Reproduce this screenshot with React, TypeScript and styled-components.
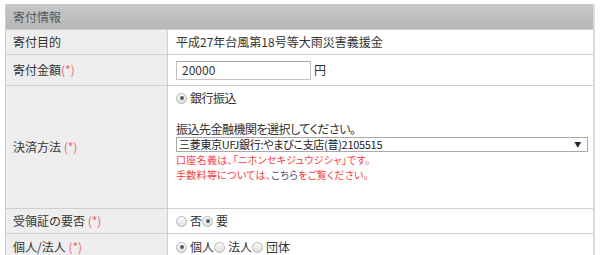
import React, { FunctionComponent } from 'react';
import styled, { createGlobalStyle } from 'styled-components';

const GlobalStyle = createGlobalStyle`
  body {
    margin: 0;
    background: #ffffff;
    font-family: 'Noto Sans CJK JP', 'Noto Sans', sans-serif;
    font-size: 12px;
    color: #333333;
  }
`;

const Panel = styled.div`
  margin: 4px 0 0 5px;
  width: 587px;
  border-right: 2px solid #dcdcdc;
  border-left: 1px solid #d0d0d0;
`;

const Header = styled.div`
  height: 25px;
  padding-left: 7px;
  display: flex;
  align-items: center;
  background: linear-gradient(#c8c8c8, #b6b6b6);
  color: #595959;
  font-size: 12px;
`;

const Row = styled.div<{ h: number }>`
  display: grid;
  grid-template-columns: 162px 1fr;
  height: ${(p) => p.h}px;
  border-top: 1px solid #cfcfcf;
`;

const Label = styled.div`
  background: #eeeeee;
  border-right: 1px solid #cfcfcf;
  padding-left: 7px;
  display: flex;
  align-items: center;
  line-height: 16px;
`;

const Req = styled.span`
  color: #f4606a;
`;

const Value = styled.div<{ top?: boolean }>`
  padding-left: 8px;
  display: flex;
  flex-direction: ${(p) => (p.top ? 'column' : 'row')};
  align-items: ${(p) => (p.top ? 'flex-start' : 'center')};
  padding-top: ${(p) => (p.top ? 4 : 0)}px;
  line-height: 16px;
`;

const TextInput = styled.div`
  width: 128px;
  height: 17px;
  border: 1px solid #c4c4c4;
  border-top-color: #a8a8a8;
  padding-left: 5px;
  display: flex;
  align-items: center;
  margin-right: 3px;
`;

const Line = styled.div<{ h?: number }>`
  height: ${(p) => p.h ?? 16}px;
  line-height: ${(p) => p.h ?? 16}px;
  display: flex;
  align-items: center;
  font-feature-settings: 'palt';
  letter-spacing: -0.5px;
`;

const Note = styled.div<{ h: number }>`
  height: ${(p) => p.h}px;
  line-height: ${(p) => p.h}px;
  font-size: 10px;
  font-feature-settings: 'palt';
  letter-spacing: 0.3px;
  color: #f53e44;
  white-space: nowrap;
`;

const Link = styled.span`
  color: #4f4f86;
`;

const SelectBox = styled.div`
  width: 402px;
  height: 13px;
  border: 1px solid #a9a9a9;
  padding: 0 6px 0 2px;
  display: flex;
  align-items: center;
  justify-content: space-between;
  font-size: 11px;
  font-feature-settings: 'palt';
  letter-spacing: -0.3px;
  line-height: 13px;
  color: #222222;
`;

const Arrow = styled.span`
  font-size: 7px;
  color: #222222;
`;

const Radio = styled.span<{ checked?: boolean }>`
  width: 9px;
  height: 9px;
  border-radius: 50%;
  border: 1px solid #b4b4b4;
  background: linear-gradient(#fdfdfd, #dedede);
  display: inline-flex;
  align-items: center;
  justify-content: center;
  margin-right: 3px;
  flex-shrink: 0;
  &::after {
    content: '';
    width: 4px;
    height: 4px;
    border-radius: 50%;
    background: ${(p) => (p.checked ? '#5a5a5a' : 'transparent')};
  }
`;

const Choice = styled.span`
  display: inline-flex;
  align-items: center;
`;

interface OptionProps {
  text: string;
  checked?: boolean;
}

const Option: FunctionComponent<OptionProps> = ({ text, checked }) => (
  <Choice>
    <Radio checked={checked} />
    {text}
  </Choice>
);

export default function App() {
  return (
    <>
      <GlobalStyle />
      <Panel>
        <Header>寄付情報</Header>
        <Row h={24}>
          <Label>寄付目的</Label>
          <Value>平成27年台風第18号等大雨災害義援金</Value>
        </Row>
        <Row h={30}>
          <Label>
            寄付金額<Req>(*)</Req>
          </Label>
          <Value>
            <TextInput>20000</TextInput>円
          </Value>
        </Row>
        <Row h={122}>
          <Label>
            決済方法&nbsp;<Req>(*)</Req>
          </Label>
          <Value top>
            <Line>
              <Option text="銀行振込" checked />
            </Line>
            <Line h={15} />
            <Line h={16}>振込先金融機関を選択してください。</Line>
            <SelectBox>
              <span>三菱東京UFJ銀行:やまびこ支店(普)2105515</span>
              <Arrow>▼</Arrow>
            </SelectBox>
            <Note h={16}>口座名義は、「ニホンセキジュウジシャ」です。</Note>
            <Note h={14}>
              手数料等については、<Link>こちら</Link>をご覧ください。
            </Note>
          </Value>
        </Row>
        <Row h={24}>
          <Label>
            受領証の要否&nbsp;<Req>(*)</Req>
          </Label>
          <Value>
            <Option text="否" />
            <Option text="要" checked />
          </Value>
        </Row>
        <Row h={26}>
          <Label>
            個人/法人&nbsp;<Req>(*)</Req>
          </Label>
          <Value>
            <Option text="個人" checked />
            <Option text="法人" />
            <Option text="団体" />
          </Value>
        </Row>
      </Panel>
    </>
  );
}
